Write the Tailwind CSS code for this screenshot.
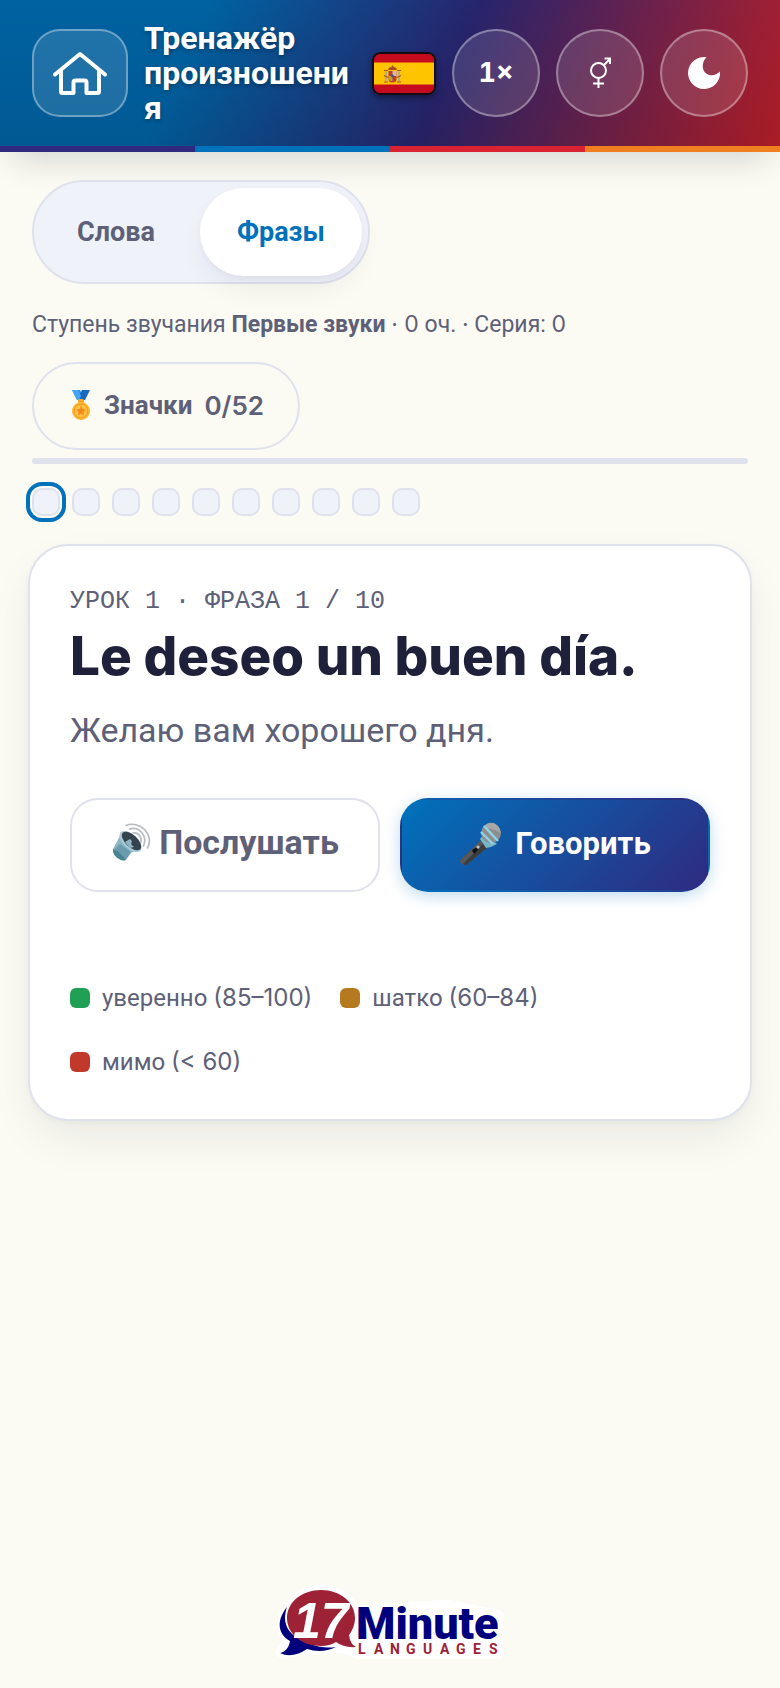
<!DOCTYPE html>
<html lang="ru">
<head>
<meta charset="utf-8">
<meta name="viewport" content="width=device-width, initial-scale=1">
<title>Тренажёр произношения</title>
<script src="https://cdn.jsdelivr.net/npm/@tailwindcss/browser@4"></script>
</head>
<body class="flex min-h-screen flex-col bg-[#fbfbf3] font-[Roboto,sans-serif] text-[#5d6077]">

<header class="shadow-[0_20px_32px_-14px_rgba(20,20,50,0.18)]">
  <div class="flex min-h-[146px] items-center gap-4 bg-[linear-gradient(180deg,rgba(0,0,0,0.14),rgba(0,0,0,0.22)),linear-gradient(115deg,#0072bc_25%,#2e2a7e_57%,#d9232e)] px-8 text-white">
    <a href="#" aria-label="На главную" class="flex h-[88px] w-24 shrink-0 items-center justify-center rounded-[28px] border-2 border-white/35 bg-white/12">
      <svg class="h-[44px] w-[54px]" viewBox="0 0 54 44" fill="none" stroke="currentColor" stroke-width="4" stroke-linecap="round" stroke-linejoin="round" aria-hidden="true">
        <path d="M2 23.500 27 3 52 23.500"/>
        <path d="M8 20v20.500a1.500 1.500 0 0 0 1.500 1.500H20.500V31.500a2 2 0 0 1 2-2h9a2 2 0 0 1 2 2V42H44.500A1.500 1.500 0 0 0 46 40.500V20"/>
      </svg>
    </a>
    <h1 class="min-w-0 flex-1 text-[32px] leading-[35px] font-bold break-words [text-shadow:0_2px_4px_rgba(0,0,0,0.3)]">Тренажёр произношения</h1>
    <svg class="h-[43px] w-16 shrink-0 rounded-lg shadow-[0_3px_6px_rgba(0,0,0,0.4)]" viewBox="0 0 64 43" role="img" aria-label="Испанский">
      <rect x="1" y="1" width="62" height="41" rx="7" fill="#c60b1e"/>
      <path d="M1 10.500h62v22H1z" fill="#ffc400"/>
      <path d="M13 19.500h2v10h-2zM26 19.500h2v10h-2z" fill="#b9a98c"/>
      <path d="M12 18.500h4M12 30h4M25 18.500h4M25 30h4M12 23.500l4 2M25 25.500l4-2" stroke="#a9542c" stroke-width="1.200"/>
      <path d="M16.500 19h8v8a4 3.500 0 0 1-8 0z" fill="#b5402c"/>
      <path d="M20.500 19h4v5h-4z" fill="#d9b6a8"/>
      <path d="M16.500 24h4v5.500q-4-.500-4-3.500z" fill="#c99a2d"/>
      <path d="M16.500 18q-1-3 4-3t4 3z" fill="#a8471d"/>
      <circle cx="20.500" cy="14.500" r="1" fill="#8a5a18"/>
      <ellipse cx="20.500" cy="24" rx="1.300" ry="1.600" fill="#3c4f96"/>
      <rect x="1" y="1" width="62" height="41" rx="7" fill="none" stroke="#160a12" stroke-width="2"/>
    </svg>
    <button type="button" class="size-[88px] shrink-0 rounded-full border-2 border-white/35 bg-white/12 font-[Inter,sans-serif] text-[27px] font-bold tabular-nums">1×</button>
    <button type="button" aria-label="Голос" class="flex size-[88px] shrink-0 items-center justify-center rounded-full border-2 border-white/35 bg-white/12">
      <svg class="h-8 w-6" viewBox="0 0 24 32" fill="none" stroke="currentColor" stroke-width="2" aria-hidden="true">
        <circle cx="10.500" cy="13.500" r="7.500"/>
        <path d="M10.500 21v10M5 26.500h11M16 8l6-6M16.500 1.500H22V7"/>
      </svg>
    </button>
    <button type="button" aria-label="Тёмная тема" class="flex size-[88px] shrink-0 items-center justify-center rounded-full border-2 border-white/35 bg-white/12">
      <svg class="size-8" viewBox="0 0 32 32" fill="currentColor" aria-hidden="true">
        <path d="M18.500.2C12 7 14.500 16.500 21.500 18c4 .9 7.500-.8 10.500-3.500A16 16 0 1 1 18.500.2Z"/>
      </svg>
    </button>
  </div>
  <div class="grid h-[6px] grid-cols-4" aria-hidden="true">
    <span class="bg-[#2f2a80]"></span><span class="bg-[#0072bc]"></span><span class="bg-[#d92332]"></span><span class="bg-[#f07f22]"></span>
  </div>
</header>

<main class="flex flex-col px-7 pt-7">
  <div class="flex flex-col items-start px-1">
    <div class="flex gap-2 rounded-full border-2 border-[#dfe1ed] bg-[#eff2f9] p-[6px] text-[27px] font-bold">
      <button type="button" aria-pressed="false" class="h-[88px] rounded-full px-[37px]">Слова</button>
      <button type="button" aria-pressed="true" class="h-[88px] rounded-full bg-white px-[37px] text-[#0072bc] shadow-[0_16px_32px_-8px_rgba(20,20,50,0.08),0_2px_6px_rgba(20,20,50,0.03)]">Фразы</button>
    </div>
    <p class="mt-6 text-[23px] leading-8">Ступень звучания <b>Первые звуки</b> <span class="font-[Inter,sans-serif]">· 0</span> оч. <span class="font-[Inter,sans-serif]">·</span> Серия: <span class="font-[Inter,sans-serif]">0</span></p>
    <button type="button" class="mt-[21px] flex h-[88px] items-center rounded-full border-2 border-[#dfe1ed] px-[34px] pb-[2px] text-[26px] font-bold">
      <svg class="mr-[10px] h-[32px] w-[26px]" viewBox="0 0 26 32" aria-hidden="true">
        <path d="M4 1h8l5 10H9z" fill="#2d8ee8"/>
        <path d="M22 1h-8l-5 10h8z" fill="#1769c2"/>
        <path d="M4 1h6l3 6-2 4H9z" fill="#42a5f5"/>
        <rect x="10" y="10" width="6" height="4" rx="1.500" fill="#f9a825"/>
        <circle cx="13" cy="22" r="9" fill="#ffb52b"/>
        <circle cx="13" cy="22" r="6.800" fill="#fdc343" stroke="#f29a1f" stroke-width="1"/>
        <path d="m13 16.800 1.500 3.300 3.600.4-2.700 2.400.8 3.600-3.200-1.800-3.200 1.800.8-3.600-2.700-2.400 3.600-.4z" fill="#f28a1c"/>
      </svg>
      Значки<span class="ml-3 font-[Inter,sans-serif] font-semibold">0/52</span>
    </button>
  </div>
  <div role="progressbar" aria-label="Прогресс" aria-valuenow="0" aria-valuemin="0" aria-valuemax="100" class="mx-1 mt-2 h-[6px] rounded-full bg-[#dfe1ed]"></div>
  <div class="mx-1 mt-6 flex gap-3">
    <button type="button" aria-label="Фраза 1" aria-current="step" class="size-7 rounded-[10px] border-2 border-[#dfe1ed] bg-[#eff2f9] outline-4 outline-offset-2 outline-[#0072bc]"></button>
    <button type="button" aria-label="Фраза 2" class="size-7 rounded-[10px] border-2 border-[#dfe1ed] bg-[#eff2f9]"></button>
    <button type="button" aria-label="Фраза 3" class="size-7 rounded-[10px] border-2 border-[#dfe1ed] bg-[#eff2f9]"></button>
    <button type="button" aria-label="Фраза 4" class="size-7 rounded-[10px] border-2 border-[#dfe1ed] bg-[#eff2f9]"></button>
    <button type="button" aria-label="Фраза 5" class="size-7 rounded-[10px] border-2 border-[#dfe1ed] bg-[#eff2f9]"></button>
    <button type="button" aria-label="Фраза 6" class="size-7 rounded-[10px] border-2 border-[#dfe1ed] bg-[#eff2f9]"></button>
    <button type="button" aria-label="Фраза 7" class="size-7 rounded-[10px] border-2 border-[#dfe1ed] bg-[#eff2f9]"></button>
    <button type="button" aria-label="Фраза 8" class="size-7 rounded-[10px] border-2 border-[#dfe1ed] bg-[#eff2f9]"></button>
    <button type="button" aria-label="Фраза 9" class="size-7 rounded-[10px] border-2 border-[#dfe1ed] bg-[#eff2f9]"></button>
    <button type="button" aria-label="Фраза 10" class="size-7 rounded-[10px] border-2 border-[#dfe1ed] bg-[#eff2f9]"></button>
  </div>

  <section class="mt-7 rounded-[40px] border-2 border-[#dfe1ed] bg-white px-10 pt-10 pb-[25px] shadow-[0_20px_48px_-8px_rgba(20,20,50,0.09),0_2px_6px_rgba(20,20,50,0.03)]">
    <p class="font-['Liberation_Mono',monospace] text-[25px] leading-8 uppercase">Урок 1 · Фраза 1 / 10</p>
    <h2 lang="es" class="mt-[6px] font-[Inter,sans-serif] text-[53px] leading-[64px] font-extrabold text-[#1f2039]">Le deseo un buen día.</h2>
    <p class="mt-4 text-[34px] leading-[52px]">Желаю вам хорошего дня.</p>
    <div class="mt-[42px] grid grid-cols-2 gap-5">
      <button type="button" class="flex h-[94px] items-center justify-center gap-2 rounded-[28px] border-2 border-[#dfe1ed] pb-[6px] text-[34px] font-bold">
        <svg class="size-10" viewBox="0 0 40 40" aria-hidden="true">
          <g fill="none" stroke="#b6bac2" stroke-width="1.600" stroke-linecap="round">
            <path d="M15 3.500C28-2 44 12 36.500 26"/>
            <path d="M18.500 7C28 4 37 14 32.500 24"/>
            <path d="M22 11c6-1 9.500 5 7.500 10"/>
          </g>
          <path d="M9 14 2 27q-1 6 8 11h4l7-8 9-2z" fill="#8fb4c4"/>
          <path d="m2 27 9 4 4 7q-2 1-5 0-9-4-8-11z" fill="#4a8391"/>
          <path d="m9 22-6 6 4 1 8 9 5-8z" fill="#6b9cac"/>
          <ellipse cx="19.500" cy="19.500" rx="13.500" ry="7" transform="rotate(43 19.500 19.500)" fill="#a9cbd8"/>
          <ellipse cx="20.500" cy="19" rx="12" ry="6" transform="rotate(43 20.500 19)" fill="#35434c"/>
          <path d="m14 20 5-3q3 2 1 5l3 3-4 1z" fill="#8fb4c4"/>
        </svg>
        Послушать
      </button>
      <button type="button" class="flex h-[94px] items-center justify-center gap-[14px] rounded-[28px] border-2 border-transparent bg-[linear-gradient(135deg,#0072bc,#2f2a80)] pb-[2px] text-[31px] font-bold text-white shadow-[0_4px_16px_rgba(0,114,188,0.25)]">
        <svg class="h-[44px] w-[42px]" viewBox="0 0 42 44" aria-hidden="true">
          <path d="m22 18 7 7L7 43q-3 1-6-3v-2z" fill="#555759"/>
          <path d="m25 21 4 4L7 43l-3-1z" fill="#3a3c3e"/>
          <path d="m13 28 5-3 1 3-4 4z" fill="#111"/>
          <circle cx="19" cy="25" r="1.600" fill="#c4c6c8"/>
          <path d="m21 17 5-6 12 11-6 3-5 1z" fill="#78b6c6"/>
          <circle cx="32" cy="11" r="10" fill="#8c8e90"/>
          <path d="M24 5Q32-3 39 4l3 7-6-3z" fill="#a5a7a9"/>
          <path d="m25 4 14 15M22 10l12 12" stroke="#8fd3e4" stroke-width="2.400"/>
        </svg>
        Говорить
      </button>
    </div>
    <ul class="mt-[74px] flex flex-wrap gap-x-[28px] text-[24px] leading-[64px]">
      <li class="flex items-center gap-3"><span class="size-5 rounded-md bg-[#1fa055]"></span><span>уверенно <span class="font-[Inter,sans-serif]">(85–100)</span></span></li>
      <li class="flex items-center gap-3"><span class="size-5 rounded-md bg-[#b57a20]"></span><span>шатко <span class="font-[Inter,sans-serif]">(60–84)</span></span></li>
      <li class="flex items-center gap-3"><span class="size-5 rounded-md bg-[#c0392b]"></span><span>мимо <span class="font-[Inter,sans-serif]">(&lt; 60)</span></span></li>
    </ul>
  </section>
</main>

<footer class="mt-auto flex justify-center pb-[18px]">
  <a href="#" aria-label="17 Minute Languages">
    <svg class="h-[88px] w-[240px]" viewBox="0 0 240 88" aria-hidden="true">
      <g fill="#fff" stroke="#fff" stroke-width="12" stroke-linejoin="round">
        <ellipse cx="51" cy="37" rx="34" ry="28"/>
        <path d="M17 30Q8 45 20 58l-8 12 18-2 43-3 15 6h140V34l-20-4-30-6-88 4z"/>
      </g>
      <path d="M17 25C5 40 9 53 20 59 19 66 15 70 10 71Q22 77 37 67q15 5 29-2-14 2-28-4C16 53 12 40 17 25Z" fill="#00007c"/>
      <path d="M51 8c19 0 34 12 34 28 0 7-3 13-6 17q1 9 7 12-12 1-20-5-6 4-15 4c-19 0-34-12-34-28S32 8 51 8Z" fill="#9d2235"/>
      <text x="23" y="56" fill="#fff" font-family="Liberation Sans, sans-serif" font-size="50" font-weight="700" font-style="italic">17</text>
      <text x="86" y="57" fill="#00007c" font-family="Roboto, sans-serif" font-size="45" font-weight="900">Minute</text>
      <text x="88 104 120 136 153 170 186 203 219" y="72" fill="#9d2235" font-family="Roboto, sans-serif" font-size="14" font-weight="700">LANGUAGES</text>
    </svg>
  </a>
</footer>
</body>
</html>
